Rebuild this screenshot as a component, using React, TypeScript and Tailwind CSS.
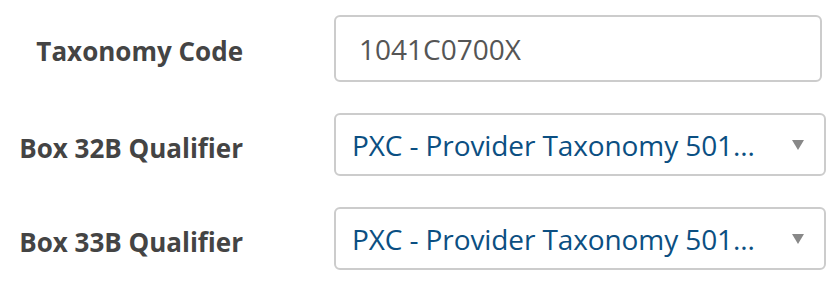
const selects = [
  { label: "Box 32B Qualifier", value: "PXC - Provider Taxonomy 501..." },
  { label: "Box 33B Qualifier", value: "PXC - Provider Taxonomy 501..." },
];

function Caret() {
  return (
    <svg width="12" height="10" viewBox="0 0 12 10" className="shrink-0">
      <path d="M0 0 H12 L6 10 Z" fill="#888" />
    </svg>
  );
}

export default function App() {
  return (
    <div
      className="w-[838px] h-[282px] bg-white pt-[15px]"
      style={{ fontFamily: '"Open Sans", sans-serif' }}
    >
      <div className="flex items-center">
        <label className="w-[243px] text-right text-[26px] font-bold text-[#444] pt-[6px]">
          Taxonomy Code
        </label>
        <div className="ml-[91px] w-[488px] h-[67px] flex items-center rounded-[6px] border-2 border-[#ccc] px-[23px] text-[28px] text-[#555]">
          1041C0700X
        </div>
      </div>

      <div className="mt-[31px] flex flex-col gap-[31px]">
        {selects.map((s) => (
          <div key={s.label} className="flex items-center">
            <label className="w-[243px] text-right text-[26px] font-bold text-[#444] pt-[8px]">
              {s.label}
            </label>
            <div className="ml-[91px] w-[492px] h-[63px] flex items-center justify-between rounded-[6px] border-2 border-[#ccc] pl-[16px] pr-[20px] text-[28px] text-[#0b4f82]">
              <span className="tracking-[-0.1px]">{s.value}</span>
              <Caret />
            </div>
          </div>
        ))}
      </div>
    </div>
  );
}
